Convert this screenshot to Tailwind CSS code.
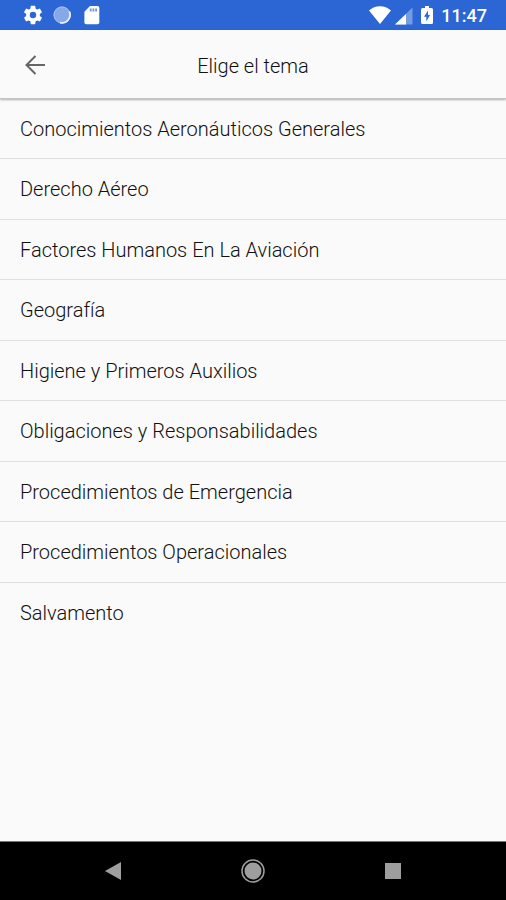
<!DOCTYPE html>
<html lang="es">
<head>
    <meta charset="UTF-8">
    <meta name="viewport" content="width=device-width, initial-scale=1.0">
    <title>Elige el tema</title>
    <script src="https://cdn.jsdelivr.net/npm/@tailwindcss/browser@4"></script>
</head>
<body class="min-h-screen flex flex-col bg-[#fafafa] font-['Roboto',sans-serif] text-[#111]">
    <!-- Status bar -->
    <div class="h-[30px] shrink-0 flex items-center justify-between bg-[#2b66d4] pl-[22px] pr-[19px] text-white">
        <div class="flex items-center gap-2">
            <svg class="size-[22px]" viewBox="0 0 24 24" fill="currentColor"><path d="M19.43 12.98c.04-.32.07-.64.07-.98s-.03-.66-.07-.98l2.11-1.65c.19-.15.24-.42.12-.64l-2-3.46c-.12-.22-.39-.3-.61-.22l-2.49 1c-.52-.4-1.08-.73-1.69-.98l-.38-2.65A.49.49 0 0 0 14 2h-4c-.25 0-.46.18-.49.42l-.38 2.65c-.61.25-1.17.59-1.69.98l-2.49-1c-.23-.09-.49 0-.61.22l-2 3.46c-.13.22-.07.49.12.64l2.11 1.65c-.04.32-.07.65-.07.98s.03.66.07.98l-2.11 1.65c-.19.15-.24.42-.12.64l2 3.46c.12.22.39.3.61.22l2.49-1c.52.4 1.08.73 1.69.98l.38 2.65c.03.24.24.42.49.42h4c.25 0 .46-.18.49-.42l.38-2.65c.61-.25 1.17-.59 1.69-.98l2.49 1c.23.09.49 0 .61-.22l2-3.46c.12-.22.07-.49-.12-.64l-2.11-1.65zM12 15.5a3.5 3.5 0 1 1 0-7 3.5 3.5 0 0 1 0 7z"/></svg>
            <svg class="size-5" viewBox="0 0 20 20">
                <circle cx="10" cy="10" r="8.5" fill="#86a8e8"/>
                <circle cx="10" cy="10" r="8" fill="none" stroke="#a5bfef" stroke-width="1"/>
                <path d="M17.3 6.5A8 8 0 0 1 8 17.6" fill="none" stroke="#e8effc" stroke-width="1.8"/>
            </svg>
            <svg class="w-6 h-5" viewBox="0 0 24 20"><path d="M10 1h7.500a1.800 1.800 0 0 1 1.800 1.800V17.500a1.800 1.800 0 0 1-1.800 1.800H6.200a1.800 1.800 0 0 1-1.800-1.800V6.700z" fill="#fff"/><path d="M9.800 3.500h1.800v3H9.800zM12.500 3.500h1.800v3h-1.800zM15.200 3.500h1.800v3h-1.800z" fill="#6d94e2"/></svg>
        </div>
        <div class="flex items-center">
            <svg class="w-[22px] h-5" viewBox="0 0 22 20" fill="currentColor"><path d="M0 5.500C6-.2 16-.2 22 5.500L11 19z"/></svg>
            <svg class="ml-1 w-[18px] h-5" viewBox="0 0 18 20" fill="currentColor"><path d="M17.500 2.500v17H0z" fill-opacity=".35"/><path d="M11 9v10.500H0z"/></svg>
            <svg class="ml-2 w-3 h-5" viewBox="0 0 12 20"><path d="M4 1h4v2h2.500A1.500 1.500 0 0 1 12 4.500v13a1.500 1.500 0 0 1-1.500 1.500h-9A1.500 1.500 0 0 1 0 17.500v-13A1.500 1.500 0 0 1 1.500 3H4z" fill="#fff"/><path d="M7 5.500 3 11.800h2.300V16.500L9 10H7z" fill="#2b66d4"/></svg>
            <span class="ml-2 pt-0.5 text-[18px] leading-6 font-medium">11:47</span>
        </div>
    </div>

    <!-- Toolbar -->
    <header class="h-[69px] shrink-0 grid grid-cols-[70px_1fr_70px] items-center border-b border-[#c4c4c4] shadow-[0_1px_2px_rgba(0,0,0,0.3)]">
        <button type="button" aria-label="Volver" class="h-full flex items-center justify-center pt-0.5 text-[#666]">
            <svg class="size-7" viewBox="0 0 28 28" fill="none" stroke="currentColor" stroke-width="2"><path d="M24 14H6M14.500 5 5.500 14l9 9"/></svg>
        </button>
        <h1 class="pt-1 text-center text-[20px] leading-6 font-light">Elige el tema</h1>
    </header>

    <!-- Topics -->
    <main class="flex-1">
        <ul class="text-[20px] leading-6 font-light">
            <li class="h-[60px] even:h-[61px] border-b border-[#e0e0e0]"><a href="#" class="h-full flex items-center px-5">Conocimientos Aeronáuticos Generales</a></li>
            <li class="h-[60px] even:h-[61px] border-b border-[#e0e0e0]"><a href="#" class="h-full flex items-center px-5">Derecho Aéreo</a></li>
            <li class="h-[60px] even:h-[61px] border-b border-[#e0e0e0]"><a href="#" class="h-full flex items-center px-5">Factores Humanos En La Aviación</a></li>
            <li class="h-[60px] even:h-[61px] border-b border-[#e0e0e0]"><a href="#" class="h-full flex items-center px-5">Geografía</a></li>
            <li class="h-[60px] even:h-[61px] border-b border-[#e0e0e0]"><a href="#" class="h-full flex items-center px-5">Higiene y Primeros Auxilios</a></li>
            <li class="h-[60px] even:h-[61px] border-b border-[#e0e0e0]"><a href="#" class="h-full flex items-center px-5">Obligaciones y Responsabilidades</a></li>
            <li class="h-[60px] even:h-[61px] border-b border-[#e0e0e0]"><a href="#" class="h-full flex items-center px-5">Procedimientos de Emergencia</a></li>
            <li class="h-[60px] even:h-[61px] border-b border-[#e0e0e0]"><a href="#" class="h-full flex items-center px-5">Procedimientos Operacionales</a></li>
            <li class="h-[60px]"><a href="#" class="h-full flex items-center px-5">Salvamento</a></li>
        </ul>
    </main>

    <!-- Android navigation -->
    <nav class="h-[59px] shrink-0 flex items-center justify-center gap-[112px] border-t border-[#777] bg-black text-[#9e9e9e]">
        <button type="button" aria-label="Atrás"><svg class="size-7" viewBox="0 0 28 28" fill="currentColor"><path d="M22 5v18L6 14z"/></svg></button>
        <button type="button" aria-label="Inicio"><svg class="size-7" viewBox="0 0 28 28" fill="currentColor"><circle cx="14" cy="14" r="8.500"/><circle cx="14" cy="14" r="11" fill="none" stroke="currentColor" stroke-width="1.500"/></svg></button>
        <button type="button" aria-label="Recientes"><svg class="size-7" viewBox="0 0 28 28" fill="currentColor"><path d="M6 6h16v16H6z"/></svg></button>
    </nav>
</body>
</html>
